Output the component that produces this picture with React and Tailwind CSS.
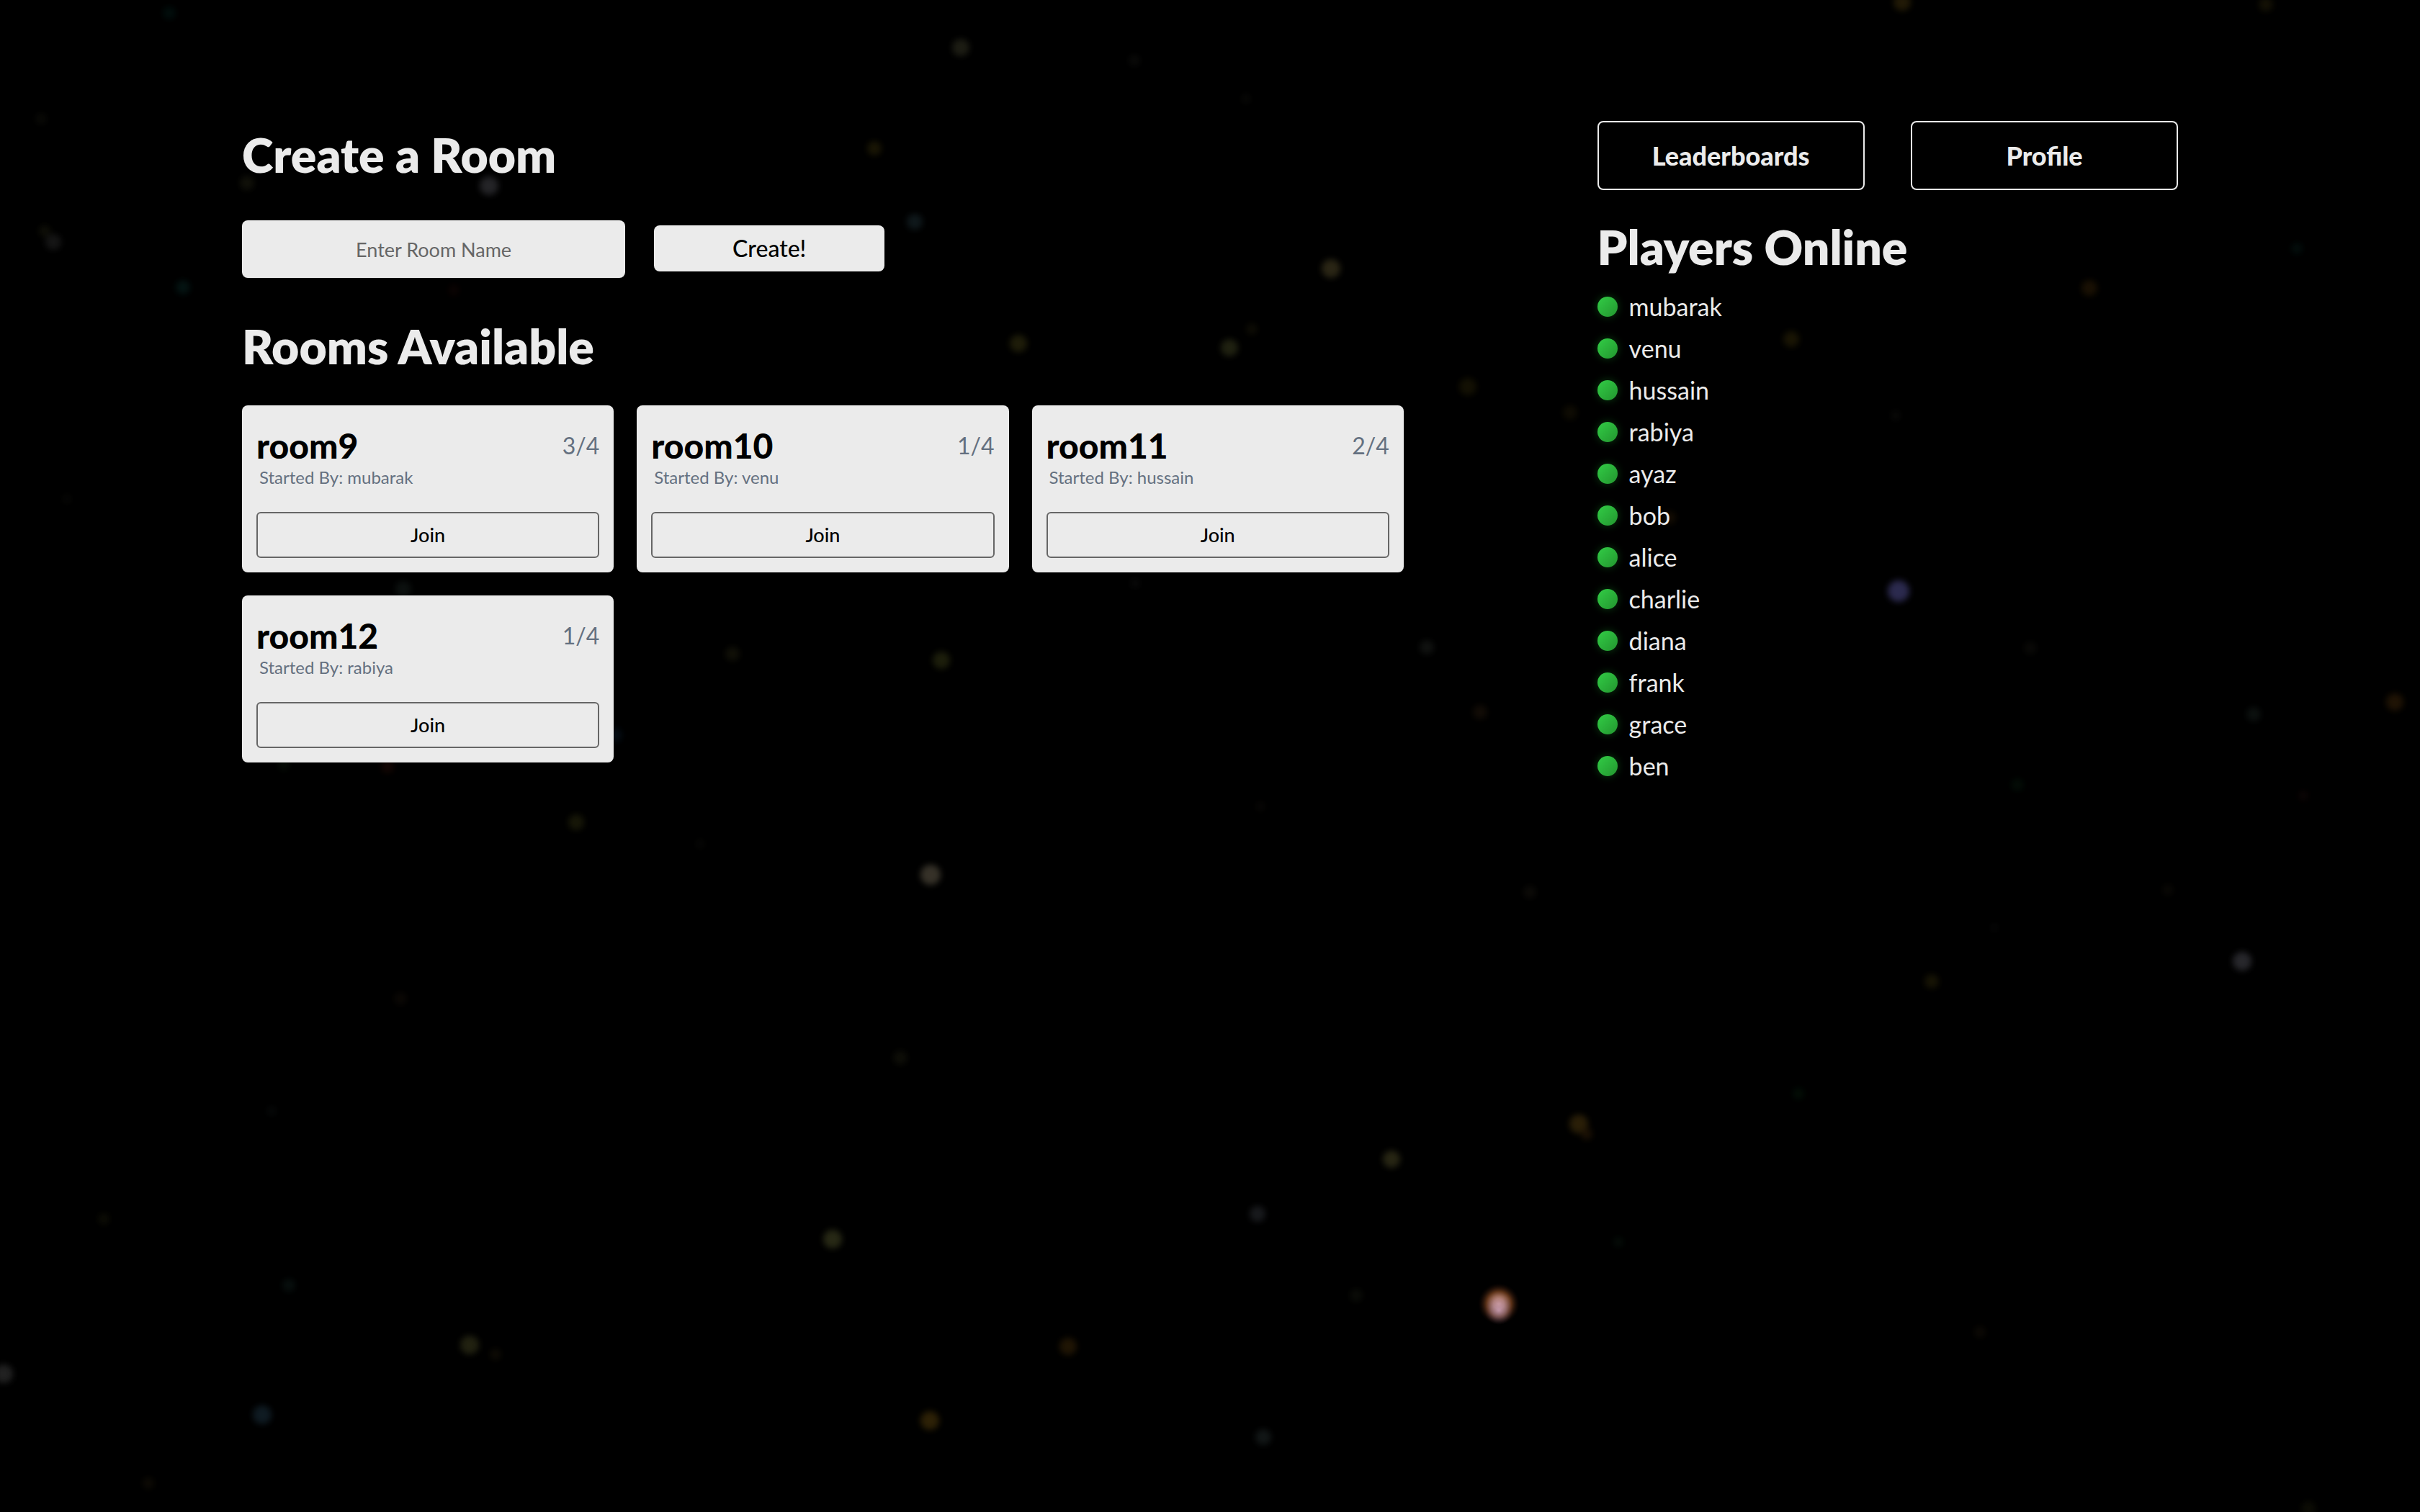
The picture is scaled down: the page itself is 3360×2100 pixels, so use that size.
const rooms = [
  { name: "room9", players: 3, startedBy: "mubarak" },
  { name: "room10", players: 1, startedBy: "venu" },
  { name: "room11", players: 2, startedBy: "hussain" },
  { name: "room12", players: 1, startedBy: "rabiya" },
];

const players = [
  "mubarak", "venu", "hussain", "rabiya", "ayaz", "bob",
  "alice", "charlie", "diana", "frank", "grace", "ben",
];

// x, y, radius, tint
const stars = [
  [235, 18, 11, "#021210"], [1334, 66, 14, "#26261a"], [1575, 84, 10, "#0d0d0b"],
  [57, 165, 10, "#0c0c08"], [1214, 206, 12, "#221d06"], [343, 254, 12, "#16160c"],
  [679, 258, 15, "#303034"], [1270, 308, 13, "#142024"], [62, 321, 10, "#14140a"],
  [74, 336, 13, "#1c1c1c"], [254, 399, 12, "#051a18"], [630, 403, 10, "#0e0403"],
  [1414, 477, 14, "#28260c"], [560, 818, 13, "#101614"], [1576, 810, 9, "#0b0b0b"],
  [1017, 908, 12, "#16150a"], [1307, 917, 14, "#26280f"], [854, 1021, 12, "#06101a"],
  [93, 693, 9, "#080806"], [2641, 3, 14, "#2c2208"], [3146, 6, 12, "#1a1606"],
  [1730, 137, 9, "#0a0a08"], [1848, 373, 15, "#38321c"], [1707, 483, 14, "#2a2c16"],
  [1738, 457, 10, "#121006"], [2038, 537, 14, "#1a1604"], [2180, 573, 12, "#141004"],
  [2487, 471, 13, "#221c05"], [2901, 400, 13, "#221604"], [3189, 345, 10, "#041210"],
  [2632, 577, 9, "#0b0b0a"], [2636, 821, 17, "#3a3868"], [1981, 899, 12, "#161816"],
  [2819, 900, 11, "#0d0c09"], [2055, 989, 12, "#181008"], [3129, 992, 12, "#101614"],
  [3325, 975, 14, "#2a1a06"], [2318, 719, 11, "#1a1004"], [394, 1062, 10, "#081008"],
  [538, 1065, 11, "#1a0804"], [800, 1142, 13, "#1e1e0a"], [972, 1172, 9, "#080806"],
  [1292, 1215, 16, "#484236"], [556, 1387, 11, "#0e0a06"], [1250, 1469, 12, "#12120a"],
  [377, 1543, 9, "#080a0a"], [144, 1693, 10, "#101006"], [1156, 1721, 15, "#34361c"],
  [401, 1785, 11, "#0a1412"], [652, 1868, 15, "#2c2c16"], [688, 1881, 10, "#120e06"],
  [1483, 1870, 14, "#2a1c06"], [5, 1908, 15, "#2c2c2c"], [364, 1965, 15, "#14242e"],
  [1291, 1973, 15, "#3c2c08"], [206, 2060, 10, "#120e06"], [2801, 1090, 11, "#041008"],
  [3198, 1105, 9, "#100606"], [1750, 1120, 9, "#0a0806"], [2124, 1239, 11, "#100e0a"],
  [3010, 1236, 10, "#0c0a06"], [2682, 1363, 12, "#1e1a06"], [3113, 1335, 15, "#34343a"],
  [2497, 1519, 10, "#041208"], [2192, 1561, 15, "#38290a"], [2203, 1575, 10, "#241606"],
  [1932, 1610, 14, "#34321a"], [1746, 1686, 13, "#202226"], [2247, 1725, 9, "#06100a"],
  [1883, 1799, 11, "#0e100a"], [2749, 1850, 10, "#100c06"], [1754, 1996, 13, "#181e1e"],
  [3205, 2095, 12, "#101006"], [2769, 1288, 8, "#080808"],
];

function Starfield() {
  return (
    <svg
      className="pointer-events-none absolute inset-0 h-full w-full"
      viewBox="0 0 3360 2100"
      preserveAspectRatio="xMidYMid slice"
      aria-hidden="true"
    >
      <defs>
        <filter id="soft" x="-5%" y="-5%" width="110%" height="110%" colorInterpolationFilters="sRGB">
          <feGaussianBlur stdDeviation="4" />
        </filter>
        <radialGradient id="flare">
          <stop offset="0" stopColor="#e4aaa2" />
          <stop offset="0.25" stopColor="#c08a7c" />
          <stop offset="0.6" stopColor="#5c3218" />
          <stop offset="1" stopColor="#140602" stopOpacity="0" />
        </radialGradient>
        <radialGradient id="glow">
          <stop offset="0" stopColor="#c8a0c0" stopOpacity="0.7" />
          <stop offset="0.5" stopColor="#9a7a98" stopOpacity="0.4" />
          <stop offset="1" stopColor="#4a3450" stopOpacity="0" />
        </radialGradient>
      </defs>
      <g filter="url(#soft)" opacity="0.75">
        {stars.map(([x, y, r, fill]) => (
          <circle key={`${x}-${y}`} cx={x} cy={y} r={r - 2} fill={fill} />
        ))}
      </g>
      <circle cx="2081" cy="1811" r="29" fill="url(#flare)" />
      <circle cx="2081" cy="1820" r="20" fill="url(#glow)" />
    </svg>
  );
}

function Heading({ children }) {
  return <h2 className="text-[66px] leading-[94px] font-extrabold">{children}</h2>;
}

function NavButton({ children }) {
  return (
    <button
      type="button"
      className="h-24 w-[46%] rounded-lg border-2 border-[#ebebeb] text-[36px] font-black"
    >
      {children}
    </button>
  );
}

function RoomCard({ room }) {
  return (
    <li className="rounded-lg bg-[#ebebeb] px-5 pt-6 pb-5 text-black">
      <div className="flex items-center justify-between leading-[64px]">
        <h3 className="text-[48px] font-black">{room.name}</h3>
        <span className="text-[32px] text-[#647080]">{room.players}/4</span>
      </div>
      <p className="pl-1 text-[24px] leading-6 text-[#647080]">Started By: {room.startedBy}</p>
      <button
        type="button"
        className="mt-9 h-16 w-full rounded-md border-2 border-[#666666] text-[27px] font-medium"
      >
        Join
      </button>
    </li>
  );
}

export default function App() {
  return (
    <div className="relative min-h-screen bg-black font-['Lato',sans-serif] text-[#ebebeb]">
      <Starfield />
      <main className="relative flex items-start justify-between px-[10%] pt-[5%]">
        <div className="w-[60%]">
          <section>
            <Heading>Create a Room</Heading>
            <form className="mt-11 flex items-baseline gap-10" onSubmit={(e) => e.preventDefault()}>
              <input
                type="text"
                aria-label="Room name"
                placeholder="Enter Room Name"
                className="h-20 w-[33%] rounded-lg bg-[#ebebeb] text-center text-[27px] text-black placeholder:text-[#666666]"
              />
              <button
                type="submit"
                className="h-16 w-80 rounded-lg bg-[#ebebeb] text-[32px] font-medium text-black"
              >
                Create!
              </button>
            </form>
          </section>
          <section className="mt-12">
            <Heading>Rooms Available</Heading>
            <ul className="mt-[35px] grid grid-cols-3 gap-8">
              {rooms.map((room) => (
                <RoomCard key={room.name} room={room} />
              ))}
            </ul>
          </section>
        </div>
        <aside className="w-[30%]">
          <nav className="flex justify-between">
            <NavButton>Leaderboards</NavButton>
            <NavButton>Profile</NavButton>
          </nav>
          <section className="mt-8">
            <Heading>Players Online</Heading>
            <ul className="mt-[22px] flex flex-col gap-[30px]">
              {players.map((name) => (
                <li key={name} className="flex items-center gap-4 text-[34px] leading-7">
                  <span className="size-7 rounded-full bg-linear-to-br from-[#32cd46] to-[#23962f] shadow-[0_0_12px_#0a3c10]" />
                  {name}
                </li>
              ))}
            </ul>
          </section>
        </aside>
      </main>
    </div>
  );
}
